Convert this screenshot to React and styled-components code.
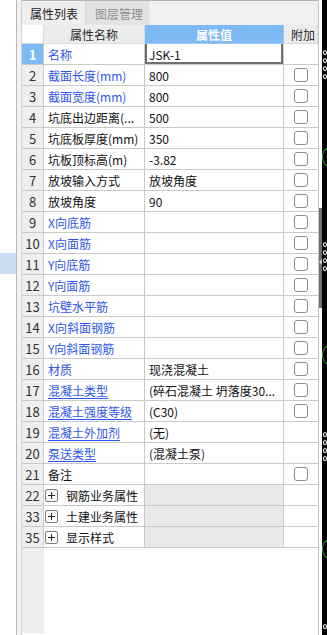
import styled, { createGlobalStyle } from 'styled-components';

const GlobalStyle = createGlobalStyle`
  html, body {
    margin: 0;
    padding: 0;
    background: #fff;
    overflow: hidden;
  }
  * {
    box-sizing: border-box;
  }
  body {
    font-family: "Noto Sans CJK SC", "Noto Sans", sans-serif;
  }
`;

const Page = styled.div`
  display: grid;
  grid-template-columns: 17px 5px 297px 3px 5px;
  width: 327px;
  height: 635px;
  overflow: hidden;
`;

const LeftStrip = styled.div`
  background: #fff;
  border-right: 1px solid #b9b9b9;
  padding-top: 253px;
`;

const SelectedItem = styled.div`
  height: 21px;
  background: #c9dcf1;
`;

const Gutter = styled.div`
  background: #f3f3f3;
  border-right: 1px solid #d2d2d2;
`;

const Panel = styled.div`
  display: flex;
  flex-direction: column;
  min-width: 0;
  background: #fff;
  border-right: 1px solid #c4c4c4;
  border-top: 1px solid #b4b4b4;
`;

const TabBar = styled.div`
  display: flex;
  height: 24px;
  flex: none;
  background: #f0f0f0;
`;

const Tab = styled.div`
  display: flex;
  align-items: center;
  padding-left: ${p => (p.$active ? 8 : 9)}px;
  width: ${p => (p.$active ? 64 : 65)}px;
  font-size: 12px;
  color: ${p => (p.$active ? '#1c1c1c' : '#8e8e8e')};
  background: ${p => (p.$active ? '#efefef' : '#e3e3e3')};
  border-right: 1px solid ${p => (p.$active ? '#d4d4d4' : '#fafafa')};
`;

const Grid = styled.div`
  display: grid;
  grid-template-columns: 22px 101px 139px 34px;
  height: ${p => p.$h}px;
  flex: none;
`;

const HeadCell = styled.div`
  display: flex;
  align-items: center;
  justify-content: ${p => (p.$left ? 'flex-start' : 'center')};
  padding-left: ${p => (p.$left ? 7 : 0)}px;
  font-size: 12px;
  font-weight: ${p => (p.$accent ? 700 : 400)};
  color: ${p => (p.$accent ? '#fff' : '#2a2a2a')};
  background: ${p => (p.$corner ? '#fff' : p.$accent ? '#7db9f5' : '#ececec')};
  border-bottom: 1px solid ${p => (p.$accent ? '#9cc8f3' : '#dadada')};
  border-right: 1px solid ${p => (p.$accent ? '#9cc8f3' : '#dcdcdc')};
  white-space: nowrap;
  overflow: hidden;
`;

const NumCell = styled.div`
  display: flex;
  align-items: center;
  justify-content: center;
  font-size: 13px;
  color: ${p => (p.$selected ? '#fff' : '#333')};
  font-weight: ${p => (p.$selected ? 700 : 400)};
  background: ${p => (p.$selected ? '#7db9f5' : '#eeeeee')};
  border-right: 1px solid #c9c9c9;
  border-bottom: 1px solid #c9c9c9;
`;

const NameCell = styled.div`
  display: flex;
  align-items: center;
  padding-left: 4px;
  font-size: 12px;
  color: ${p => (p.$blue ? '#2d56ea' : '#111')};
  text-decoration: ${p => (p.$underline ? 'underline' : 'none')};
  text-underline-offset: 2px;
  background: #fff;
  border-right: 1px solid #c9c9c9;
  border-bottom: 1px solid #c9c9c9;
  white-space: nowrap;
  overflow: hidden;
`;

const ValueCell = styled.div`
  display: flex;
  align-items: center;
  padding-left: 4px;
  font-size: 12px;
  color: #111;
  background: ${p => (p.$group ? '#e9e9e9' : '#fff')};
  border-right: 1px solid #c9c9c9;
  border-bottom: 1px solid #c9c9c9;
  box-shadow: ${p =>
    p.$editing
      ? 'inset 2px 0 0 #6f6f6f, inset -2px 0 0 #6f6f6f, inset 0 -2px 0 #6f6f6f'
      : 'none'};
  white-space: nowrap;
  overflow: hidden;
`;

const AttachCell = styled.div`
  display: flex;
  align-items: center;
  justify-content: center;
  background: #fff;
  border-bottom: 1px solid #c9c9c9;
`;

const Checkbox = styled.div`
  width: 14px;
  height: 14px;
  border: 1px solid #8d8d8d;
  border-radius: 3px;
  background: #fff;
`;

const Expander = styled.span`
  position: relative;
  width: 13px;
  height: 13px;
  margin-left: -3px;
  margin-right: 8px;
  border: 1px solid #7c7c7c;
  border-radius: 2px;
  background: #fafafa;
  flex-shrink: 0;

  &::before,
  &::after {
    content: '';
    position: absolute;
    background: #222;
  }
  &::before {
    left: 2px;
    right: 2px;
    top: 5px;
    height: 1px;
  }
  &::after {
    top: 2px;
    bottom: 2px;
    left: 5px;
    width: 1px;
  }
`;

const Filler = styled.div`
  flex: 1;
  display: grid;
  grid-template-columns: 22px 1fr;
  padding-bottom: 2px;
`;

const FillerNum = styled.div`
  background: #eeeeee;
`;

const Splitter = styled.div`
  padding-top: 208px;
  background: #fff;
`;

const SplitBar = styled.div`
  position: relative;
  height: 100px;
  background: #6b7179;

  &::after {
    content: '';
    position: absolute;
    left: 0;
    top: 51px;
    border-top: 3px solid transparent;
    border-bottom: 3px solid transparent;
    border-right: 3px solid #c8cbd0;
  }
`;

const Canvas = styled.div`
  position: relative;
  background-color: #000000;
  overflow: hidden;
`;

const Mark = styled.span`
  position: absolute;
  left: ${p => (p.$arc ? 0 : 1)}px;
  width: ${p => (p.$arc ? 12 : 4)}px;
  height: ${p => (p.$arc ? 18 : 5)}px;
  border: 1px solid ${p => (p.$arc ? '#1faa2a' : '#ffffff')};
  border-radius: 50%;
`;

const dots = [52, 60, 68, 76, 244, 252, 260, 268, 434, 442, 450, 458, 626];
const arcs = [148, 346, 540];

const rows = [
  { n: 1, name: '名称', value: 'JSK-1', blue: true, editing: true },
  { n: 2, name: '截面长度(mm)', value: '800', blue: true, check: true },
  { n: 3, name: '截面宽度(mm)', value: '800', blue: true, check: true },
  { n: 4, name: '坑底出边距离(...', value: '500', check: true },
  { n: 5, name: '坑底板厚度(mm)', value: '350', check: true },
  { n: 6, name: '坑板顶标高(m)', value: '-3.82', check: true },
  { n: 7, name: '放坡输入方式', value: '放坡角度', check: true },
  { n: 8, name: '放坡角度', value: '90', check: true },
  { n: 9, name: 'X向底筋', blue: true, check: true },
  { n: 10, name: 'X向面筋', blue: true, check: true },
  { n: 11, name: 'Y向底筋', blue: true, check: true },
  { n: 12, name: 'Y向面筋', blue: true, check: true },
  { n: 13, name: '坑壁水平筋', blue: true, check: true },
  { n: 14, name: 'X向斜面钢筋', blue: true, check: true },
  { n: 15, name: 'Y向斜面钢筋', blue: true, check: true },
  { n: 16, name: '材质', value: '现浇混凝土', blue: true, check: true },
  { n: 17, name: '混凝土类型', value: '(碎石混凝土 坍落度30...', blue: true, underline: true, check: true },
  { n: 18, name: '混凝土强度等级', value: '(C30)', blue: true, underline: true, check: true },
  { n: 19, name: '混凝土外加剂', value: '(无)', blue: true, underline: true },
  { n: 20, name: '泵送类型', value: '(混凝土泵)', blue: true, underline: true },
  { n: 21, name: '备注', check: true },
];

const groups = [
  { n: 22, name: '钢筋业务属性' },
  { n: 33, name: '土建业务属性' },
  { n: 35, name: '显示样式' },
];

export default function App() {
  return (
    <>
      <GlobalStyle />
      <Page>
        <LeftStrip>
          <SelectedItem />
        </LeftStrip>
        <Gutter />
        <Panel>
          <TabBar>
            <Tab $active>属性列表</Tab>
            <Tab>图层管理</Tab>
          </TabBar>
          <Grid $h={19}>
            <HeadCell $corner />
            <HeadCell>属性名称</HeadCell>
            <HeadCell $accent>属性值</HeadCell>
            <HeadCell $left>附加</HeadCell>
          </Grid>
          {rows.map(r => (
            <Grid key={r.n} $h={21}>
              <NumCell $selected={r.n === 1}>{r.n}</NumCell>
              <NameCell $blue={r.blue} $underline={r.underline}>{r.name}</NameCell>
              <ValueCell $editing={r.editing}>{r.value}</ValueCell>
              <AttachCell>{r.check && <Checkbox />}</AttachCell>
            </Grid>
          ))}
          {groups.map(g => (
            <Grid key={g.n} $h={21}>
              <NumCell>{g.n}</NumCell>
              <NameCell>
                <Expander />
                {g.name}
              </NameCell>
              <ValueCell $group />
              <AttachCell />
            </Grid>
          ))}
          <Filler>
            <FillerNum />
            <div />
          </Filler>
        </Panel>
        <Splitter>
          <SplitBar />
        </Splitter>
        <Canvas>
          {dots.map(y => (
            <Mark key={y} style={{ top: y - 2 }} />
          ))}
          {arcs.map(y => (
            <Mark key={y} $arc style={{ top: y }} />
          ))}
        </Canvas>
      </Page>
    </>
  );
}
